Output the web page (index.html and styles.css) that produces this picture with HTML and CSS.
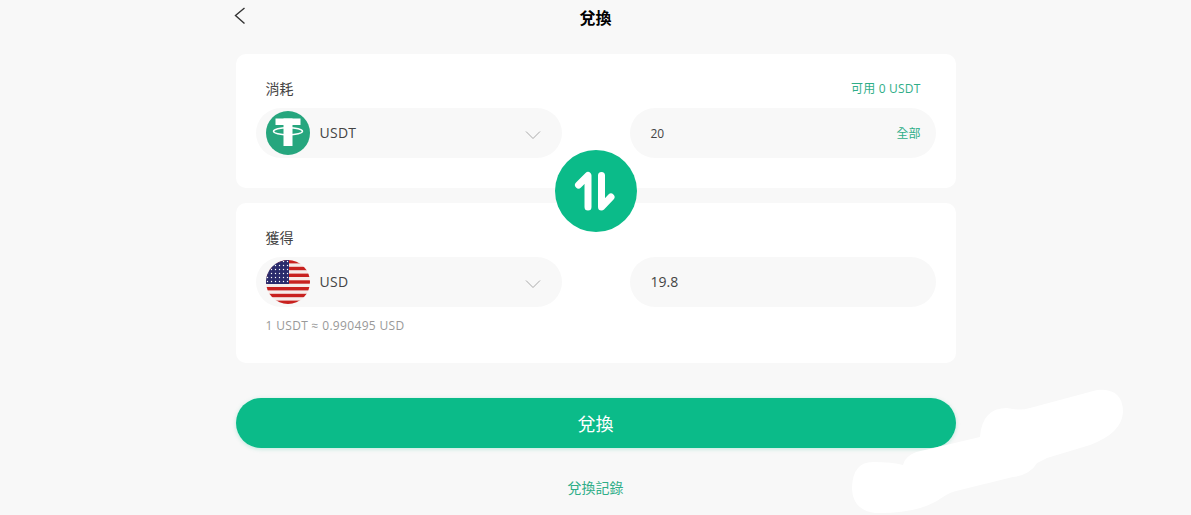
FILE: index.html
```html
<!DOCTYPE html>
<html lang="zh-Hant">
<head>
    <meta charset="UTF-8">
    <title>兌換</title>
    <link rel="stylesheet" href="styles.css">
</head>
<body>
    <div class="page">
        <header class="top-bar">
            <svg class="back" width="12" height="18" viewBox="0 0 12 18"><path d="M10.5 1 L1.5 8.5 L10.5 16.5" fill="none" stroke="#333" stroke-width="1.4"/></svg>
            <h1>兌換</h1>
        </header>

        <div class="cards">
            <section class="card">
                <div class="card-head">
                    <span>消耗</span>
                    <span class="balance">可用 0 USDT</span>
                </div>
                <div class="row">
                    <div class="select">
                        <svg class="coin" width="44" height="44" viewBox="0 0 44 44">
                            <circle cx="22" cy="22" r="22" fill="#26a67e"/>
                            <rect x="9.5" y="7.5" width="25" height="6.5" fill="#fff"/>
                            <rect x="17.5" y="7.5" width="9" height="27.5" fill="#fff"/>
                            <ellipse cx="22" cy="20.3" rx="14.5" ry="3.6" fill="none" stroke="#fff" stroke-width="1.5"/>
                        </svg>
                        <span class="select-name">USDT</span>
                        <svg class="chevron" width="16" height="10" viewBox="0 0 16 10"><path d="M1 1.5 L8 8.5 L15 1.5" fill="none" stroke="#aaa" stroke-width="1"/></svg>
                    </div>
                    <div class="amount">
                        <span class="amount-small">20</span>
                        <span class="all">全部</span>
                    </div>
                </div>
            </section>

            <button class="swap" type="button" aria-label="swap">
                <svg width="82" height="82" viewBox="0 0 82 82"><path d="M23.5 35 L33 25.5 V57 M46.5 25.5 V57 L56 47" fill="none" stroke="#fff" stroke-width="7" stroke-linecap="round" stroke-linejoin="round"/></svg>
            </button>

            <section class="card">
                <div class="card-head">
                    <span>獲得</span>
                </div>
                <div class="row">
                    <div class="select">
                        <svg class="coin" width="44" height="44" viewBox="0 0 44 44">
                            <defs>
                                <clipPath id="flagClip"><circle cx="22" cy="22" r="22"/></clipPath>
                                <pattern id="stars" width="4" height="4" patternUnits="userSpaceOnUse">
                                    <circle cx="1.5" cy="1.5" r="0.7" fill="#fff"/>
                                </pattern>
                            </defs>
                            <g clip-path="url(#flagClip)">
                                <rect width="44" height="44" fill="#f6ece9"/>
                                <rect y="0" width="44" height="3.4" fill="#c8211f"/>
                                <rect y="6.8" width="44" height="3.4" fill="#c8211f"/>
                                <rect y="13.6" width="44" height="3.4" fill="#c8211f"/>
                                <rect y="20.3" width="44" height="3.4" fill="#c8211f"/>
                                <rect y="27" width="44" height="3.4" fill="#c8211f"/>
                                <rect y="33.8" width="44" height="3.4" fill="#c8211f"/>
                                <rect y="40.6" width="44" height="3.4" fill="#c8211f"/>
                                <rect width="23" height="24" fill="#2a2b6c"/>
                                <rect width="23" height="24" fill="url(#stars)"/>
                            </g>
                        </svg>
                        <span class="select-name">USD</span>
                        <svg class="chevron" width="16" height="10" viewBox="0 0 16 10"><path d="M1 1.5 L8 8.5 L15 1.5" fill="none" stroke="#aaa" stroke-width="1"/></svg>
                    </div>
                    <div class="amount">
                        <span class="amount-big">19.8</span>
                    </div>
                </div>
                <p class="rate">1 USDT ≈ 0.990495 USD</p>
            </section>
        </div>

        <button class="submit" type="button">兌換</button>
        <a class="history" href="#">兌換記錄</a>
    </div>

    <!-- white scribble painted over the screenshot -->
    <svg class="scribble" width="1191" height="515" viewBox="0 0 1191 515">
        <path d="M852 487 Q853 462 873 462 Q893 462 903 465 Q906 453 925 450 L980 437 Q982 408 1007 408 Q1020 411 1030 408 L1097 390 Q1123 388 1123 412 Q1122 433 1090 445 L1047 458 L1037 463 Q1030 475 1013 477 L960 490 Q950 492 943 497 Q920 514 875 513 Q852 510 852 487 Z" fill="#fff"/>
    </svg>
</body>
</html>
```

FILE: styles.css
```css
* {
    box-sizing: border-box;
}
body {
    margin: 0;
    height: 515px;
    overflow: hidden;
    background-color: #f8f8f8;
    font-family: "Open Sans", "Noto Sans CJK TC", sans-serif;
    font-size: 14px;
    color: #444;
}
.page {
    width: 720px;
    margin: 0 auto;
}
.top-bar {
    position: relative;
    height: 34px;
    margin-bottom: 20px;
    display: flex;
    align-items: center;
    justify-content: center;
}
.top-bar h1 {
    margin: 0;
    font-size: 16px;
    font-weight: 700;
    color: #000;
}
.back {
    position: absolute;
    left: -2px;
    top: 7px;
}
.cards {
    position: relative;
    display: flex;
    flex-direction: column;
    gap: 15px;
}
.card {
    background-color: #fff;
    border-radius: 10px;
    padding: 24px 20px 30px;
}
.card-head {
    height: 22px;
    padding: 0 15px 0 10px;
    margin-bottom: 8px;
    display: flex;
    justify-content: space-between;
    align-items: center;
    line-height: 22px;
}
.balance {
    font-size: 12px;
    letter-spacing: 0.2px;
    color: #2fae88;
}
.row {
    display: flex;
    justify-content: space-between;
}
.select,
.amount {
    width: 306px;
    height: 50px;
    border-radius: 25px;
    background-color: #f8f8f8;
    display: flex;
    align-items: center;
}
.select {
    padding: 0 21px 0 10px;
}
.select-name {
    margin-left: 10px;
    flex: 1;
    margin-bottom: 1px;
    letter-spacing: 0.25px;
}
.chevron {
    margin-top: 4px;
}
.amount {
    padding: 0 15px 0 21px;
    justify-content: space-between;
}
.amount-small {
    font-size: 12px;
}
.amount-big {
    font-size: 14px;
    margin-bottom: 1px;
}
.all {
    font-size: 12px;
    color: #2fae88;
}
.rate {
    margin: 10px 0 -2px 10px;
    font-size: 12px;
    line-height: 18px;
    letter-spacing: 0.33px;
    color: #999;
}
.swap {
    position: absolute;
    left: 319px;
    top: 96px;
    width: 82px;
    height: 82px;
    padding: 0;
    border: none;
    border-radius: 50%;
    background-color: #0bbb89;
}
.swap svg {
    display: block;
}
.submit {
    display: block;
    width: 100%;
    height: 50px;
    margin-top: 35px;
    border: none;
    border-radius: 25px;
    background-color: #0bbb89;
    box-shadow: 0 1px 4px rgba(11, 189, 139, 0.25);
    color: #fff;
    font-family: inherit;
    font-size: 18px;
}
.history {
    display: block;
    margin-top: 30px;
    line-height: 20px;
    text-align: center;
    color: #2fae88;
    text-decoration: none;
}
.scribble {
    position: absolute;
    left: 0;
    top: 0;
    pointer-events: none;
}
```
